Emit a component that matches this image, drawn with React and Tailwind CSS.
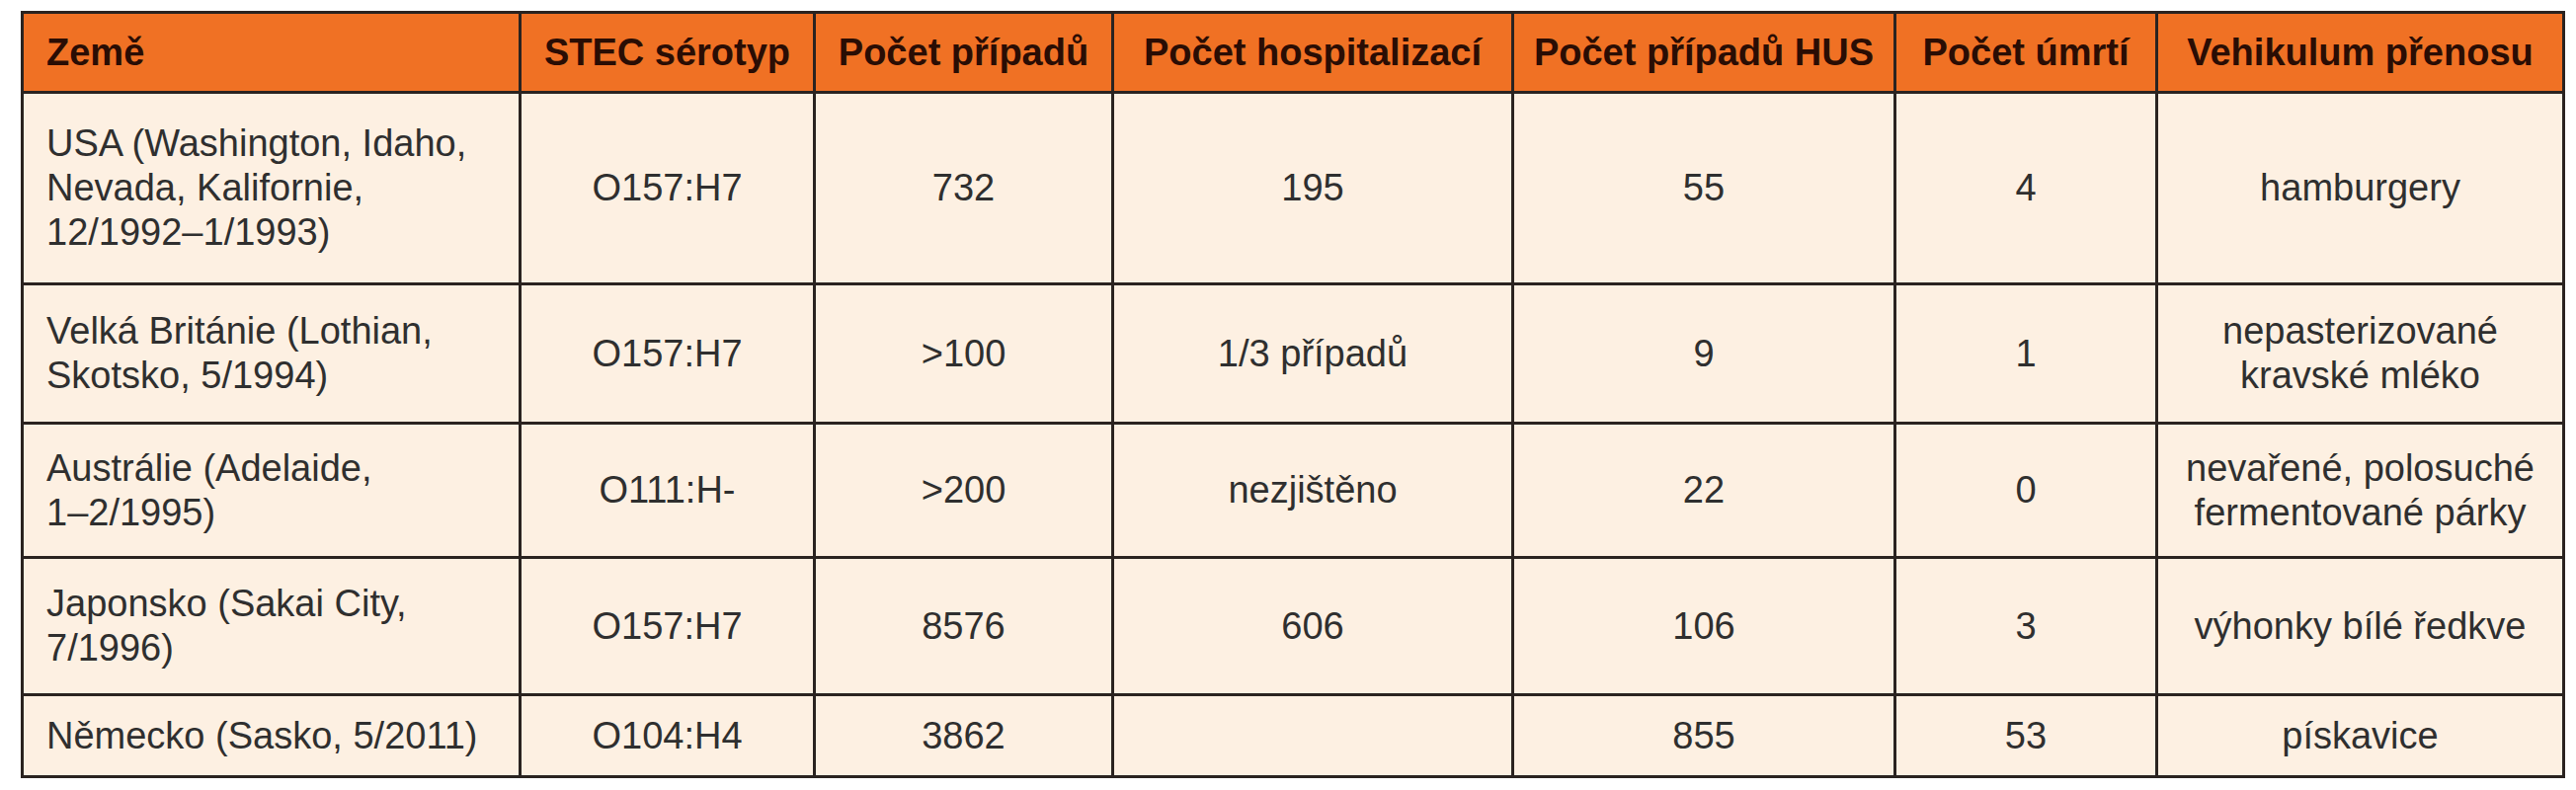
import React from "react";

const headers = [
  "Země",
  "STEC sérotyp",
  "Počet případů",
  "Počet hospitalizací",
  "Počet případů HUS",
  "Počet úmrtí",
  "Vehikulum přenosu",
];

const rows = [
  {
    h: "h-[191px]",
    cells: [
      ["USA (Washington, Idaho,", "Nevada, Kalifornie,", "12/1992–1/1993)"],
      ["O157:H7"],
      ["732"],
      ["195"],
      ["55"],
      ["4"],
      ["hamburgery"],
    ],
  },
  {
    h: "h-[138px]",
    cells: [
      ["Velká Británie (Lothian,", "Skotsko, 5/1994)"],
      ["O157:H7"],
      [">100"],
      ["1/3 případů"],
      ["9"],
      ["1"],
      ["nepasterizované", "kravské mléko"],
    ],
  },
  {
    h: "h-[133px]",
    cells: [
      ["Austrálie (Adelaide,", "1–2/1995)"],
      ["O111:H-"],
      [">200"],
      ["nezjištěno"],
      ["22"],
      ["0"],
      ["nevařené, polosuché", "fermentované párky"],
    ],
  },
  {
    h: "h-[136px]",
    cells: [
      ["Japonsko (Sakai City,", "7/1996)"],
      ["O157:H7"],
      ["8576"],
      ["606"],
      ["106"],
      ["3"],
      ["výhonky bílé ředkve"],
    ],
  },
  {
    h: "h-[80px]",
    cells: [
      ["Německo (Sasko, 5/2011)"],
      ["O104:H4"],
      ["3862"],
      [""],
      ["855"],
      ["53"],
      ["pískavice"],
    ],
  },
];

export default function App() {
  return (
    <div className="w-[2608px] h-[800px] bg-white pt-[11px] pl-[21px] font-['Liberation_Sans',Arial,sans-serif]">
      <div className="inline-grid grid-cols-[501px_295px_299px_402px_384px_262px_409px] gap-[3px] p-[3px] bg-[#2a2320]">
        {headers.map((t, i) => (
          <div
            key={t}
            className={`h-[78px] bg-[#f07124] flex items-center text-[38px] leading-[45px] font-bold text-[#2a0d04] whitespace-nowrap ${
              i === 0 ? "justify-start pl-[23px]" : "justify-center"
            }`}
          >
            {t}
          </div>
        ))}
        {rows.map((r, ri) =>
          r.cells.map((lines, ci) => (
            <div
              key={`${ri}-${ci}`}
              className={`${r.h} bg-[#fdf0e2] flex flex-col justify-center text-[38px] leading-[45px] text-[#2f2f2f] whitespace-nowrap ${
                ci === 0 ? "items-start pl-[23px]" : "items-center text-center"
              }`}
            >
              {lines.map((l, li) => (
                <span key={li}>{l}</span>
              ))}
            </div>
          ))
        )}
      </div>
    </div>
  );
}
